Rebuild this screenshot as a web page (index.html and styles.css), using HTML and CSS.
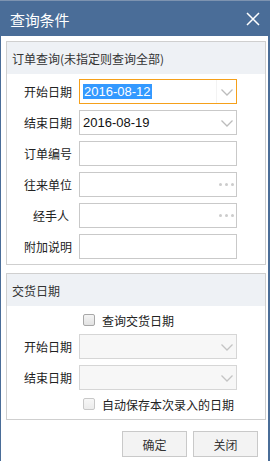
FILE: index.html
```html
<!DOCTYPE html>
<html lang="zh">
<head>
<meta charset="utf-8">
<title>查询条件</title>
<link rel="stylesheet" href="styles.css">
</head>
<body>
<div class="window">
  <div class="titlebar">
    <span class="title">查询条件</span>
    <svg class="close" width="14" height="14" viewBox="0 0 14 14"><path d="M1 1 L13 13 M13 1 L1 13" stroke="#fff" stroke-width="1.5" fill="none"/></svg>
  </div>
  <div class="content">
    <section class="group">
      <div class="group-head">订单查询(未指定则查询全部)</div>
      <div class="form">
        <label class="lbl">开始日期</label>
        <div class="field focus"><span class="val"><span class="sel">2016-08-12</span></span><span class="drop"><svg width="12" height="7" viewBox="0 0 12 7"><path d="M0.5 0.5 L6 6 L11.5 0.5" stroke="#bcbcbc" stroke-width="1.3" fill="none"/></svg></span></div>
        <label class="lbl">结束日期</label>
        <div class="field"><span class="val">2016-08-19</span><span class="drop"><svg width="12" height="7" viewBox="0 0 12 7"><path d="M0.5 0.5 L6 6 L11.5 0.5" stroke="#bcbcbc" stroke-width="1.3" fill="none"/></svg></span></div>
        <label class="lbl">订单编号</label>
        <div class="field"><span class="val"></span></div>
        <label class="lbl">往来单位</label>
        <div class="field"><span class="val"></span><span class="dots"><i></i><i></i><i></i></span></div>
        <label class="lbl lbl-short">经手人</label>
        <div class="field"><span class="val"></span><span class="dots"><i></i><i></i><i></i></span></div>
        <label class="lbl">附加说明</label>
        <div class="field"><span class="val"></span></div>
      </div>
    </section>
    <section class="group group2">
      <div class="group-head">交货日期</div>
      <div class="form form2">
        <div class="check-row first"><span class="box"></span><span>查询交货日期</span></div>
        <label class="lbl">开始日期</label>
        <div class="field disabled"><span class="val"></span><span class="drop"><svg width="12" height="7" viewBox="0 0 12 7"><path d="M0.5 0.5 L6 6 L11.5 0.5" stroke="#c4c4c4" stroke-width="1.3" fill="none"/></svg></span></div>
        <label class="lbl">结束日期</label>
        <div class="field disabled"><span class="val"></span><span class="drop"><svg width="12" height="7" viewBox="0 0 12 7"><path d="M0.5 0.5 L6 6 L11.5 0.5" stroke="#c4c4c4" stroke-width="1.3" fill="none"/></svg></span></div>
        <div class="check-row last"><span class="box box-dis"></span><span>自动保存本次录入的日期</span></div>
      </div>
    </section>
    <div class="buttons">
      <button class="btn">确定</button>
      <button class="btn">关闭</button>
    </div>
  </div>
</div>
</body>
</html>
```
FILE: styles.css
```css
* { box-sizing: border-box; }
html, body { margin: 0; padding: 0; background: #fff; }
body {
  font-family: "Noto Sans CJK SC", "Liberation Sans", sans-serif;
  font-size: 12px;
  color: #222;
  width: 272px;
  height: 461px;
  overflow: hidden;
}
.window {
  width: 270px;
  height: 461px;
  border-left: 1px solid #4a6d98;
  border-right: 2px solid #4a6d98;
  background: #fff;
}
.titlebar {
  height: 36px;
  margin: 0 -2px 0 -1px;
  background: #4a6d98;
  border-top: 1px solid #7d93b0;
  display: flex;
  align-items: center;
  justify-content: space-between;
  padding: 0 10px 0 10px;
}
.title {
  color: #fff;
  font-size: 15px;
  line-height: 1;
  padding-top: 1px;
  letter-spacing: -0.2px;
}
.close { display: block; margin-top: 0; }
.content { padding: 5px 2px 0 5px; }
.group {
  border: 1px solid #cfcfcf;
  width: 260px;
}
.group-head {
  height: 32px;
  background: #eef1f5;
  color: #333;
  display: flex;
  align-items: center;
  padding-left: 5px;
  padding-top: 1px;
  font-size: 12px;
}
.form {
  display: grid;
  grid-template-columns: 65px 158px;
  column-gap: 7px;
  row-gap: 6px;
  padding: 5px 0 5px 0;
  align-items: center;
}
.lbl {
  text-align: right;
  color: #222;
  font-size: 12px;
}
.lbl-short { padding-right: 3px; }
.field {
  height: 25px;
  border: 1px solid #c9c9c9;
  background: #fff;
  display: flex;
  align-items: center;
}
.field .val {
  flex: 1;
  padding-left: 3px;
  font-family: "Liberation Sans", sans-serif;
  font-size: 13px;
  color: #111;
  line-height: 15px;
}
.field.focus { border-color: #f5a01a; }
.sel { background: #3399ff; color: #fff; padding: 0 1px; }
.drop {
  width: 20px;
  height: 100%;
  display: flex;
  align-items: center;
  justify-content: center;
  border-left: 1px solid #f3f3f3;
  padding-top: 1px;
}
.field:not(.focus) .drop { border-left-color: transparent; }
.dots {
  display: flex;
  gap: 3px;
  padding-right: 2px;
}
.dots i {
  width: 3px;
  height: 3px;
  background: #cccccc;
  border-radius: 50%;
  display: block;
}
.field.disabled { background: #f7f7f7; border-color: #d6d6d6; }
.group2 { margin-top: 8px; }
.form2 { padding: 2px 0 2px 0; row-gap: 6px; }
.check-row {
  grid-column: 2;
  display: flex;
  align-items: center;
  gap: 7px;
  padding-left: 4px;
  height: 24px;
  color: #222;
}
.check-row.first { margin-bottom: -4px; }
.check-row.last { margin-top: -5px; height: 26px; }
.box {
  width: 12px;
  height: 12px;
  border: 1px solid #a8a8a8;
  border-radius: 2px;
  background: linear-gradient(#f4f4f4, #e2e2e2);
}
.box-dis { border-color: #c8c8c8; background: linear-gradient(#f7f7f7, #ececec); }
.buttons {
  display: flex;
  justify-content: flex-end;
  gap: 6px;
  padding-right: 8px;
  margin-top: 11px;
}
.btn {
  width: 65px;
  height: 26px;
  border: 1px solid #c9c9c9;
  background: #f3f3f3;
  font-family: "Noto Sans CJK SC", sans-serif;
  font-size: 12px;
  color: #333;
  padding: 0;
}
```
